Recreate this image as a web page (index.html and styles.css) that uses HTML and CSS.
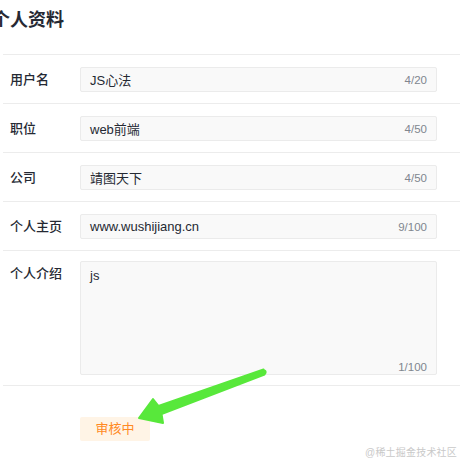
FILE: index.html
```html
<!DOCTYPE html>
<html lang="zh-CN">
<head>
    <meta charset="UTF-8">
    <title>个人资料</title>
    <link rel="stylesheet" href="styles.css">
</head>
<body>
    <div class="profile">
        <h1 class="profile-title">个人资料</h1>

        <div class="form">
            <div class="form-row">
                <label class="form-label">用户名</label>
                <div class="field">
                    <span class="field-value">JS心法</span>
                    <span class="field-count">4/20</span>
                </div>
            </div>
            <div class="form-row">
                <label class="form-label">职位</label>
                <div class="field">
                    <span class="field-value">web前端</span>
                    <span class="field-count">4/50</span>
                </div>
            </div>
            <div class="form-row">
                <label class="form-label">公司</label>
                <div class="field">
                    <span class="field-value">靖图天下</span>
                    <span class="field-count">4/50</span>
                </div>
            </div>
            <div class="form-row">
                <label class="form-label">个人主页</label>
                <div class="field">
                    <span class="field-value">www.wushijiang.cn</span>
                    <span class="field-count">9/100</span>
                </div>
            </div>
            <div class="form-row form-row-last">
                <label class="form-label">个人介绍</label>
                <div class="field field-area">
                    <span class="field-value">js</span>
                    <span class="field-count">1/100</span>
                </div>
            </div>
        </div>

        <div class="actions">
            <span class="status-button">审核中</span>
        </div>
    </div>

    <svg class="arrow" width="460" height="460" viewBox="0 0 460 460">
        <polygon points="263.5,369.5 158.5,406 153,399 139,418 163,423 161.5,414 264.5,374.5"
                 fill="#58e83b" stroke="#58e83b" stroke-width="2" stroke-linejoin="round"/>
        <circle cx="264" cy="372" r="2.6" fill="#58e83b"/>
    </svg>

    <div class="watermark">@稀土掘金技术社区</div>
</body>
</html>
```

FILE: styles.css
```css
body {
    margin: 0;
    padding: 0;
    background: #fff;
    font-family: "Liberation Sans", "Noto Sans CJK SC", sans-serif;
    color: #252933;
    overflow: hidden;
}

.profile {
    padding-left: 3px;
}

.profile-title {
    margin: 0 0 22px -11px;
    padding-top: 8px;
    font-size: 18px;
    line-height: 24px;
    font-weight: 700;
}

.form-row {
    display: grid;
    grid-template-columns: 77px 1fr;
    border-top: 1px solid #ececec;
    padding: 12px 23px 11px 0;
}

.form-row-last {
    border-bottom: 1px solid #ececec;
    padding: 10px 23px 10px 0;
}

.form-label {
    padding-left: 7px;
    font-size: 13px;
    line-height: 25px;
    font-weight: 500;
}

.field {
    box-sizing: border-box;
    display: flex;
    justify-content: space-between;
    align-items: center;
    height: 25px;
    padding: 0 9px;
    background: #f9f9f9;
    border: 1px solid #ebebeb;
    border-radius: 2px;
}

.field-value {
    font-size: 13px;
}

.field-count {
    font-size: 11.5px;
    color: #80868f;
}

.field-area {
    height: 114px;
    flex-direction: column;
    align-items: stretch;
    padding-top: 6px;
    padding-bottom: 1px;
}

.field-area .field-count {
    align-self: flex-end;
}

.actions {
    padding: 31px 0 0 77px;
}

.status-button {
    display: inline-block;
    width: 70px;
    height: 24px;
    line-height: 24px;
    text-align: center;
    background: #fff4e6;
    color: #ff8a24;
    font-size: 13px;
    border-radius: 2px;
}

.arrow {
    position: absolute;
    left: 0;
    top: 0;
}

.watermark {
    position: absolute;
    right: 3px;
    top: 444px;
    font-size: 10px;
    color: #c9c9c9;
    letter-spacing: 0.2px;
}
```
